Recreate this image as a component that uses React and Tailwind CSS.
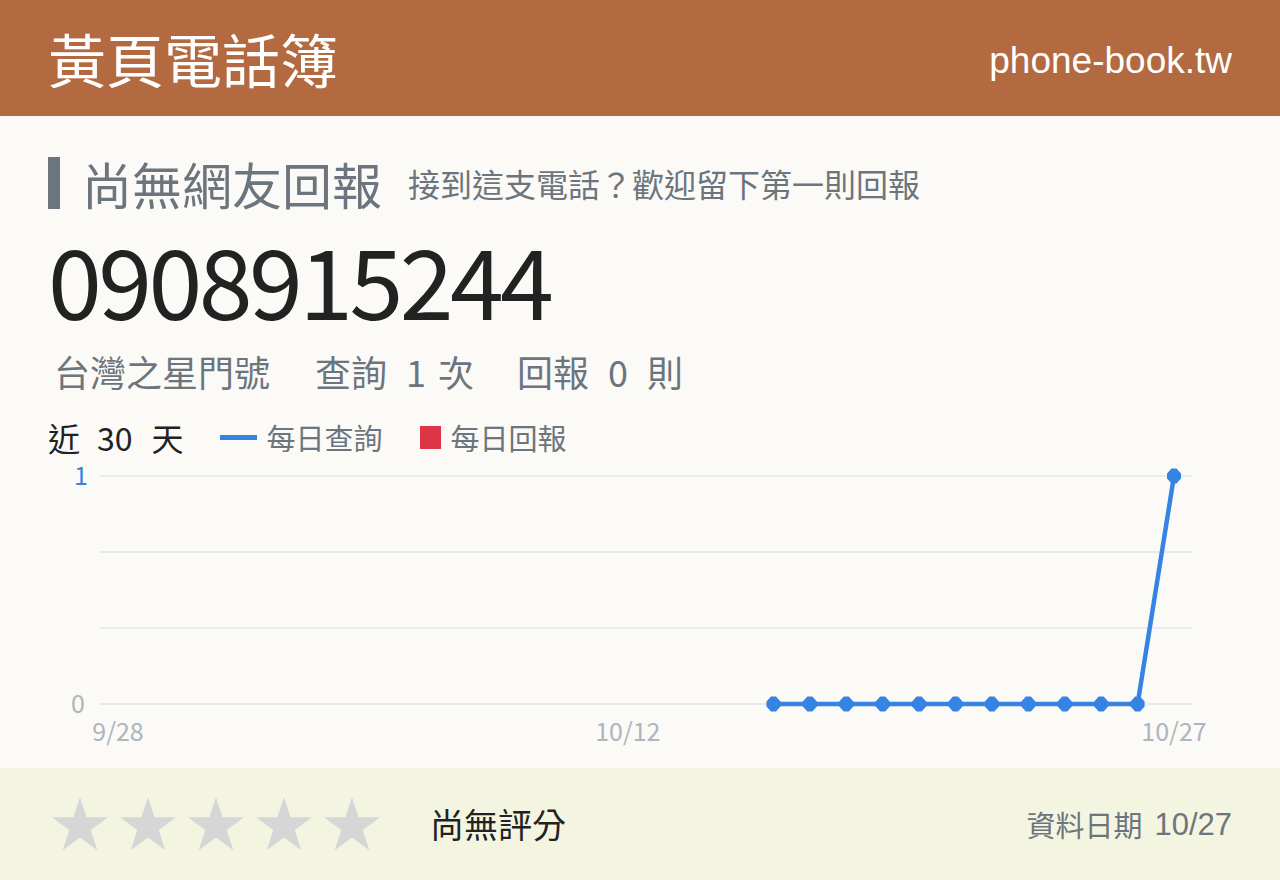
import React from "react";

const cjk = "font-['Noto_Sans_CJK_TC','Noto_Sans',sans-serif]";
const latin = "font-['Liberation_Sans',Arial,sans-serif]";

// 30 days, 9/28 .. 10/27; queries only recorded from index 18 on
const X0 = 118;
const STEP = 1056 / 29;
const queries = Array.from({ length: 12 }, (_, k) => ({
  i: 18 + k,
  v: k === 11 ? 1 : 0,
}));

const yFor = (v) => (v === 1 ? 20 : 248);

const Marker = ({ x, y }) => (
  <polygon
    points={`${x - 2.5},${y - 7.5} ${x + 2.5},${y - 7.5} ${x + 7},${y - 2.5} ${x + 7},${y + 2.5} ${x + 2.5},${y + 7.5} ${x - 2.5},${y + 7.5} ${x - 7},${y + 2.5} ${x - 7},${y - 2.5}`}
    fill="#3584e4"
  />
);

const Chart = () => {
  const pts = queries.map((q) => [X0 + q.i * STEP, yFor(q.v)]);
  return (
    <svg width="1280" height="312" viewBox="0 0 1280 312" className="block">
      {[20, 96, 172, 248].map((y) => (
        <line key={y} x1="100" x2="1192" y1={y} y2={y} stroke="#e8eaee" strokeWidth="2" />
      ))}
      <g fontFamily="'Noto Sans CJK TC', sans-serif" fontSize="25">
        <text x="88" y="29" textAnchor="end" fill="#3584e4">1</text>
        <text x="85" y="257" textAnchor="end" fill="#aeb5bd">0</text>
        <text x={X0} y="285" textAnchor="middle" fill="#aeb5bd">9/28</text>
        <text x={X0 + 14 * STEP} y="285" textAnchor="middle" fill="#aeb5bd">10/12</text>
        <text x={X0 + 29 * STEP} y="285" textAnchor="middle" fill="#aeb5bd">10/27</text>
      </g>
      <polyline
        points={pts.map((p) => p.join(",")).join(" ")}
        fill="none"
        stroke="#3584e4"
        strokeWidth="4.5"
        strokeLinejoin="round"
      />
      {pts.map(([x, y]) => (
        <Marker key={x} x={x} y={y} />
      ))}
    </svg>
  );
};

const Star = () => (
  <svg width="56" height="54" viewBox="0 0 56 54">
    <polygon
      points="28,0 34.6,20.3 56,20.3 38.7,32.9 45.3,53.2 28,40.6 10.7,53.2 17.3,32.9 0,20.3 21.4,20.3"
      fill="#d6d6d6"
    />
  </svg>
);

export default function App() {
  return (
    <div className={`w-[1280px] h-[880px] flex flex-col bg-[#fbfaf7] ${cjk}`}>
      <header className="h-[116px] shrink-0 bg-[#b36a40] px-12 flex items-center justify-between">
        <h1 className="text-[58px] leading-none text-white">黃頁電話簿</h1>
        <span className={`${latin} text-[37px] leading-none text-white mt-[4px]`}>phone-book.tw</span>
      </header>

      <main className="flex-1 flex flex-col">
        <div className="px-12 pt-[34px] flex flex-col">
          <div className="h-[66px] flex items-center">
            <div className="w-3 h-[52px] bg-[#6c757d]" />
            <h2 className="ml-[22px] text-[50px] leading-none text-[#6c757d]">尚無網友回報</h2>
            <p className="ml-[26px] text-[32px] leading-none text-[#6c757d]">接到這支電話？歡迎留下第一則回報</p>
          </div>

          <div className="h-[136px] flex items-center">
            <div className="text-[97px] leading-[80px] tracking-[-3.6px] text-[#222] -mt-[12px]">0908915244</div>
          </div>

          <div className="h-[38px] flex items-center text-[36px] leading-none text-[#6c757d] pl-[6px]">
            <span>台灣之星門號</span>
            <span className="ml-[45px]">查詢</span>
            <span className="ml-[19px]">1</span>
            <span className="ml-[12px]">次</span>
            <span className="ml-[43px]">回報</span>
            <span className="ml-[19px]">0</span>
            <span className="ml-[19px]">則</span>
          </div>

          <div className="mt-[28px] h-[38px] flex items-center">
            <span className="text-[32px] leading-none text-[#222]">近</span>
            <span className="ml-[17px] text-[32px] leading-none text-[#222]">30</span>
            <span className="ml-[19px] text-[32px] leading-none text-[#222]">天</span>
            <span className="ml-[36px] w-[37px] h-[5px] bg-[#3584e4]" />
            <span className="ml-[10px] text-[29px] leading-none text-[#6c757d]">每日查詢</span>
            <span className="ml-[37px] w-[21px] h-[23px] bg-[#dc3545]" />
            <span className="ml-[10px] text-[29px] leading-none text-[#6c757d]">每日回報</span>
          </div>
        </div>

        <Chart />
      </main>

      <footer className="h-[112px] shrink-0 bg-[#f3f5e1] pl-[52px] pr-12 flex items-center">
        <div className="flex items-center gap-3">
          <Star />
          <Star />
          <Star />
          <Star />
          <Star />
        </div>
        <span className="ml-[50px] text-[34px] leading-none text-[#222]">尚無評分</span>
        <div className="ml-auto flex items-center">
          <span className="text-[29px] leading-none text-[#6c757d]">資料日期</span>
          <span className={`${latin} ml-3 text-[31px] leading-none text-[#6c757d]`}>10/27</span>
        </div>
      </footer>
    </div>
  );
}
